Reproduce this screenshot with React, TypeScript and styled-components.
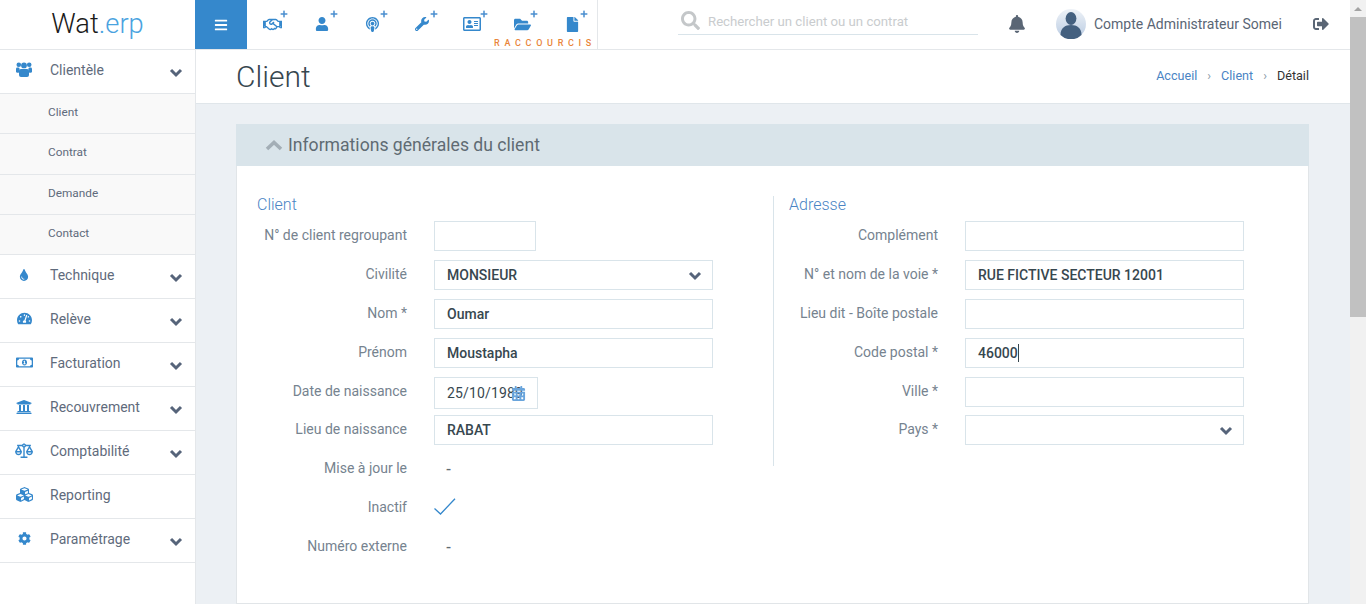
import React from "react";
import styled, { createGlobalStyle } from "styled-components";
import {
  FaBars, FaBell, FaCalendarAlt, FaCog, FaCubes, FaFile, FaFolderOpen,
  FaPlus, FaPodcast, FaRegAddressCard, FaRegHandshake, FaRegMoneyBillAlt, FaSearch, FaSignOutAlt,
  FaTachometerAlt, FaTint, FaUniversity, FaUser, FaWrench,
} from "react-icons/fa";
import { LiaBalanceScaleSolid } from "react-icons/lia";

const Global = createGlobalStyle`
  html, body { margin: 0; padding: 0; height: 604px; overflow: hidden; }
  body { font-family: Roboto, "Liberation Sans", sans-serif; background: #ecf0f4; }
  * { box-sizing: border-box; }
`;

const Shell = styled.div`display: flex; height: 604px; overflow: hidden;`;
const Page = styled.div`flex: 1; min-width: 0; display: flex; flex-direction: column;`;

const Scrollbar = styled.div`
  width: 16px; background: #f1f1f1; display: flex; flex-direction: column; align-items: center; flex: none;
`;
const ScrollArrow = styled.div`
  height: 17px; flex: none; display: flex; align-items: center; justify-content: center;
  &::before { content: ""; border: 4px solid transparent; border-top: 0; border-bottom: 4px solid #a3a3a3; }
`;
const ScrollThumb = styled.div`width: 100%; height: 300px; background: #c1c1c1; flex: none;`;

const Topbar = styled.header`
  height: 50px; flex: none; background: #fff; border-bottom: 1px solid #e4e7ea; display: flex; align-items: stretch;
`;
const Logo = styled.div`
  width: 195px; flex: none; display: flex; align-items: center; justify-content: center; padding: 0 0 2px 0;
  font-size: 27.3px; font-weight: 300; color: #1b1b1b;
  span { color: #4aa3df; }
`;
const MenuButton = styled.div`
  width: 52px; flex: none; background: #3588cc; color: #fff; display: flex; align-items: center; justify-content: center; font-size: 14px;
`;
const Shortcuts = styled.nav`
  position: relative; display: flex; width: 351px; flex: none; border-right: 1px solid #e4e7ea;
`;
const Shortcut = styled.div`
  position: relative; width: 50px; flex: none; display: flex; align-items: center; justify-content: center;
  padding-bottom: 1px; color: #3588cc; font-size: 16px;
`;
const Plus = styled.span`
  position: absolute; top: 10px; right: 9px; font-size: 8px; line-height: 8px; color: #4a8ed0;
`;
const ShortcutCaption = styled.span`
  position: absolute; right: 5px; bottom: 0; font-size: 9px; line-height: 12px; letter-spacing: 4.7px; margin-right: -4px;
  font-weight: 500; color: #e9853a; white-space: nowrap;
`;
const Search = styled.div`
  margin: 7px 0 0 80px; width: 300px; height: 28px; border-bottom: 1px solid #d9e4ea; display: flex; align-items: center; gap: 8px;
  padding: 1px 0 0 3px; color: #c9ccce; font-size: 13.2px; flex: none;
  svg { font-size: 19px; color: #c4c7c9; flex: none; margin-top: -2px; }
`;
const BellBox = styled.div`
  margin-left: 30px; width: 18px; display: flex; align-items: center; color: #5a6675; font-size: 18px; flex: none; padding-bottom: 2px;
`;
const Account = styled.div`
  margin-left: 30px; display: flex; align-items: center; gap: 8px; color: #5a6675; font-size: 14px; flex: none; padding-bottom: 2px;
`;
const LogoutBox = styled.div`
  margin-left: 31px; display: flex; align-items: center; color: #5a6675; font-size: 16px; flex: none; padding-bottom: 2px;
`;

const Body = styled.div`flex: 1; min-height: 0; display: flex;`;
const Sidebar = styled.aside`
  width: 196px; flex: none; background: #fff; border-right: 1px solid #e4e7ea;
`;
const MenuItem = styled.div`
  height: 44px; border-bottom: 1px solid #e4e7ea; display: flex; align-items: center; padding: 0 12px 4px 0; color: #5f6b7c; font-size: 14px;
`;
const MenuIcon = styled.span`
  width: 50px; flex: none; display: flex; justify-content: center; padding: 0 2px 0 0; color: #3588cc; font-size: 15px;
`;
const MenuLabel = styled.span`flex: 1;`;
const MenuChevron = styled.svg`display: block; width: 14px; height: 10px; margin-top: 7px;`;
const SubItem = styled.div`
  height: 40.25px; padding-left: 48px; display: flex; align-items: center; background: #f9f9f9; border-bottom: 1px solid #e4e7ea;
  font-size: 11.8px; color: #5f6b7c; padding-bottom: 3px;
`;

const Main = styled.main`flex: 1; min-width: 0; display: flex; flex-direction: column;`;
const TitleBar = styled.div`
  height: 54px; flex: none; background: #fff; border-bottom: 1px solid #e0e6ea; padding: 0 41px 0 40px; display: flex; align-items: center; justify-content: space-between;
`;
const Title = styled.h1`margin: 0; font-size: 30px; font-weight: 300; color: #37474f;`;
const Crumbs = styled.div`display: flex; gap: 10px; font-size: 12.6px; color: #333; padding-bottom: 3px;`;
const CrumbLink = styled.span`color: #4a84c4;`;
const CrumbSep = styled.span`color: #8a9ba8;`;

const Content = styled.div`flex: 1; min-height: 0; padding: 20px 41px 0 40px;`;
const Panel = styled.section`
  height: 480px; background: #fff; border: 1px solid #e1e5e8; border-top: 0; border-radius: 2px 2px 0 0;
`;
const PanelHead = styled.div`
  height: 42px; margin: 0 -1px; background: #d9e4ea; display: flex; align-items: center; gap: 5px; padding: 0 0 1px 29px; font-size: 17.6px; color: #5f6b73;
`;
const HeadChevron = styled.svg`display: block; width: 18px; height: 12px; margin-top: 1px;`;
const Columns = styled.div`display: flex; padding: 30px 0 0 20px;`;
const Column = styled.div<{ $divided?: boolean }>`
  width: 516px;
  flex: none;
  ${(p) => p.$divided && "border-left: 1px solid #d9e4ea; padding-left: 14px; height: 270px;"}
`;
const ColTitle = styled.h3<{ $inset?: number }>`
  margin: 0 0 8px ${(p) => p.$inset ?? 0}px; font-size: 16px; line-height: 17px; font-weight: 300; color: #4a84c4;
`;
const Row = styled.div<{ $gap?: number }>`
  display: grid; grid-template-columns: 150px 1fr; column-gap: 27px; align-items: center; margin-bottom: ${(p) => p.$gap ?? 9}px;
  min-height: 30px;
`;
const Label = styled.label<{ $lift?: number }>`
  text-align: right; font-size: 14px; color: #76838f; white-space: nowrap; padding-bottom: ${(p) => p.$lift ?? 3}px;
`;
const Field = styled.div<{ $w?: number; $h?: number; $date?: boolean }>`
  position: relative; width: ${(p) => p.$w ?? 279}px; height: ${(p) => p.$h ?? 30}px; border: 1px solid #d9e4ea; background: #fff;
  display: flex; align-items: center; padding: 0 12px; font-size: 14px; font-weight: ${(p) => (p.$date ? 400 : 500)}; color: #37474f; white-space: nowrap; overflow: hidden;
  letter-spacing: ${(p) => (p.$date ? "0.15px" : "0")};
`;
const Caret = styled.span`display: inline-block; width: 1px; height: 18px; background: #37474f;`;
const SelectArrow = styled.svg`
  position: absolute; right: 10px; top: 10px; display: block; width: 14px; height: 10px;
`;
const CalendarIcon = styled.span`
  position: absolute; right: 11px; top: 8px; display: flex; font-size: 15px; color: #6aa5dc;
`;
const Plain = styled.div`padding: 0 12px 1px; font-size: 15px; font-weight: 500; color: #5f6b73;`;
const Check = styled.svg`display: block; width: 22px; height: 18px; margin-bottom: 2px;`;
const GroupIcon = styled.svg`display: block; width: 16px; height: 15px; fill: #3588cc;`;

const chevronDown = <polyline points="2,2 7,7 12,2" fill="none" stroke="#56647a" strokeWidth="3" />;

const menu = [
  { label: "Technique", icon: <FaTint size={12} /> },
  { label: "Relève", icon: <FaTachometerAlt /> },
  { label: "Facturation", icon: <FaRegMoneyBillAlt size={17} /> },
  { label: "Recouvrement", icon: <FaUniversity size={16} /> },
  { label: "Comptabilité", icon: <LiaBalanceScaleSolid size={22} /> },
  { label: "Reporting", icon: <FaCubes size={17} />, leaf: true },
  { label: "Paramétrage", icon: <FaCog size={13} /> },
];

const shortcuts = [
  <FaRegHandshake size={19} />, <FaUser size={14} />, <FaPodcast size={15} />, <FaWrench size={14} />,
  <FaRegAddressCard size={18} />, <FaFolderOpen size={17} />, <FaFile size={15} />,
];

const Avatar = () => (
  <svg width="30" height="30" viewBox="0 0 30 30">
    <defs>
      <linearGradient id="avatarBg" x1="0" y1="0" x2="0" y2="1">
        <stop offset="0" stopColor="#eef2f7" />
        <stop offset="1" stopColor="#b9cbe2" />
      </linearGradient>
    </defs>
    <circle cx="15" cy="15" r="15" fill="url(#avatarBg)" />
    <ellipse cx="15" cy="9.5" rx="5.4" ry="6.5" fill="#44607f" />
    <path d="M4.5 26 C4.5 19 9 16 15 16 C21 16 25.5 19 25.5 26 A15 15 0 0 1 4.5 26Z" fill="#44607f" />
  </svg>
);

export default function App() {
  return (
    <Shell>
      <Global />
      <Page>
        <Topbar>
          <Logo>Wat<span>.erp</span></Logo>
          <MenuButton><FaBars /></MenuButton>
          <Shortcuts>
            {shortcuts.map((icon, i) => (
              <Shortcut key={i}>{icon}<Plus><FaPlus /></Plus></Shortcut>
            ))}
            <ShortcutCaption>RACCOURCIS</ShortcutCaption>
          </Shortcuts>
          <Search><FaSearch />Rechercher un client ou un contrat</Search>
          <BellBox><FaBell /></BellBox>
          <Account><Avatar />Compte Administrateur Somei</Account>
          <LogoutBox><FaSignOutAlt /></LogoutBox>
        </Topbar>
        <Body>
          <Sidebar>
            <MenuItem>
              <MenuIcon>
                <GroupIcon viewBox="0 0 16 15">
                  <circle cx="2.8" cy="2.8" r="2.3" />
                  <circle cx="13.2" cy="2.8" r="2.3" />
                  <circle cx="8" cy="3.4" r="2.9" />
                  <rect x="0" y="5.6" width="3.6" height="5.2" rx="1.4" />
                  <rect x="12.4" y="5.6" width="3.6" height="5.2" rx="1.4" />
                  <rect x="3" y="7" width="10" height="8" rx="2" />
                </GroupIcon>
              </MenuIcon>
              <MenuLabel>Clientèle</MenuLabel>
              <MenuChevron viewBox="0 0 14 10">{chevronDown}</MenuChevron>
            </MenuItem>
            {["Client", "Contrat", "Demande", "Contact"].map((s) => <SubItem key={s}>{s}</SubItem>)}
            {menu.map((m) => (
              <MenuItem key={m.label}>
                <MenuIcon>{m.icon}</MenuIcon>
                <MenuLabel>{m.label}</MenuLabel>
                {!m.leaf && <MenuChevron viewBox="0 0 14 10">{chevronDown}</MenuChevron>}
              </MenuItem>
            ))}
          </Sidebar>
          <Main>
            <TitleBar>
              <Title>Client</Title>
              <Crumbs>
                <CrumbLink>Accueil</CrumbLink><CrumbSep>›</CrumbSep>
                <CrumbLink>Client</CrumbLink><CrumbSep>›</CrumbSep>
                <span>Détail</span>
              </Crumbs>
            </TitleBar>
            <Content>
              <Panel>
                <PanelHead>
                  <HeadChevron viewBox="0 0 18 12">
                    <polyline points="2,10 9,3.5 16,10" fill="none" stroke="#a3aeb6" strokeWidth="3.6" />
                  </HeadChevron>
                  Informations générales du client
                </PanelHead>
                <Columns>
                  <Column>
                    <ColTitle>Client</ColTitle>
                    <Row><Label>N° de client regroupant</Label><Field $w={102} /></Row>
                    <Row><Label>Civilité</Label><Field>MONSIEUR<SelectArrow viewBox="0 0 14 10">{chevronDown}</SelectArrow></Field></Row>
                    <Row><Label>Nom *</Label><Field>Oumar</Field></Row>
                    <Row><Label>Prénom</Label><Field>Moustapha</Field></Row>
                    <Row $gap={6}><Label $lift={5}>Date de naissance</Label><Field $w={104} $h={32} $date>25/10/1989<CalendarIcon><FaCalendarAlt /></CalendarIcon></Field></Row>
                    <Row><Label>Lieu de naissance</Label><Field>RABAT</Field></Row>
                    <Row><Label>Mise à jour le</Label><Plain>-</Plain></Row>
                    <Row>
                      <Label>Inactif</Label>
                      <Check viewBox="0 0 22 18">
                        <polyline points="0.5,10.5 6.5,16 21,0.8" fill="none" stroke="#3588cc" strokeWidth="1.3" />
                      </Check>
                    </Row>
                    <Row><Label>Numéro externe</Label><Plain>-</Plain></Row>
                  </Column>
                  <Column $divided>
                    <ColTitle $inset={1}>Adresse</ColTitle>
                    <Row><Label>Complément</Label><Field /></Row>
                    <Row><Label>N° et nom de la voie *</Label><Field>RUE FICTIVE SECTEUR 12001</Field></Row>
                    <Row><Label>Lieu dit - Boîte postale</Label><Field /></Row>
                    <Row><Label>Code postal *</Label><Field>46000<Caret /></Field></Row>
                    <Row $gap={8}><Label>Ville *</Label><Field /></Row>
                    <Row><Label>Pays *</Label><Field><SelectArrow viewBox="0 0 14 10">{chevronDown}</SelectArrow></Field></Row>
                  </Column>
                </Columns>
              </Panel>
            </Content>
          </Main>
        </Body>
      </Page>
      <Scrollbar>
        <ScrollArrow />
        <ScrollThumb />
      </Scrollbar>
    </Shell>
  );
}
